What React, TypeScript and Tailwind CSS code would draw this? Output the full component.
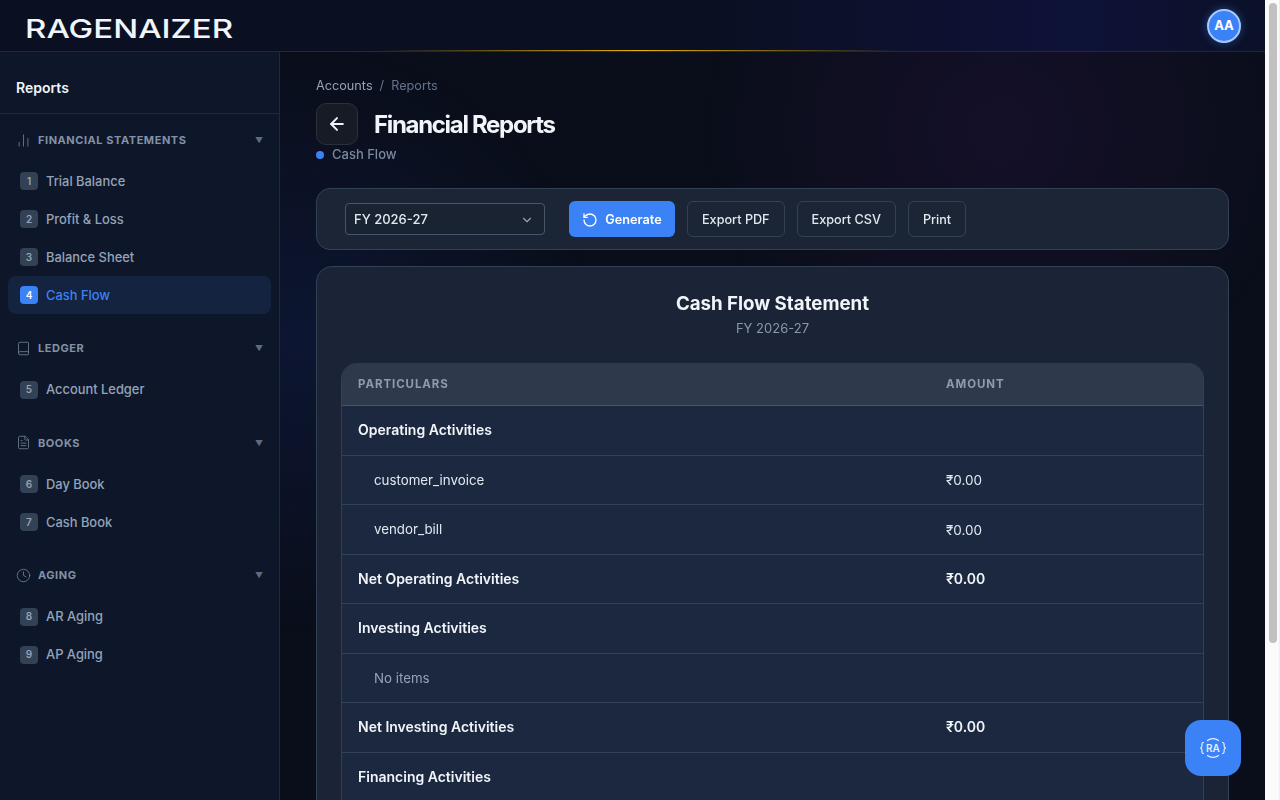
import React from 'react';
import { ArrowLeft, Book, ChartNoAxesColumn, ChevronDown, Clock, FileText, RotateCcw } from 'lucide-react';

const sections = [
  {
    title: 'Financial Statements',
    icon: ChartNoAxesColumn,
    items: [
      { n: 1, label: 'Trial Balance' },
      { n: 2, label: 'Profit & Loss' },
      { n: 3, label: 'Balance Sheet' },
      { n: 4, label: 'Cash Flow', active: true },
    ],
  },
  { title: 'Ledger', icon: Book, items: [{ n: 5, label: 'Account Ledger' }] },
  {
    title: 'Books',
    icon: FileText,
    items: [
      { n: 6, label: 'Day Book' },
      { n: 7, label: 'Cash Book' },
    ],
  },
  {
    title: 'Aging',
    icon: Clock,
    items: [
      { n: 8, label: 'AR Aging' },
      { n: 9, label: 'AP Aging' },
    ],
  },
];

const rows = [
  { label: 'Operating Activities', kind: 'head' },
  { label: 'customer_invoice', amount: '₹0.00', kind: 'item' },
  { label: 'vendor_bill', amount: '₹0.00', kind: 'item' },
  { label: 'Net Operating Activities', amount: '₹0.00', kind: 'head' },
  { label: 'Investing Activities', kind: 'head' },
  { label: 'No items', kind: 'empty' },
  { label: 'Net Investing Activities', amount: '₹0.00', kind: 'head' },
  { label: 'Financing Activities', kind: 'head' },
  { label: 'No items', kind: 'empty' },
  { label: 'Net Financing Activities', amount: '₹0.00', kind: 'head' },
  { label: 'Net Cash Flow', amount: '₹0.00', kind: 'head' },
];

function Sidebar() {
  return (
    <aside className="sticky top-[52px] h-[748px] w-[280px] shrink-0 border-r border-[#1e293b] bg-[#0e1729]">
      <div className="flex h-[62px] items-center border-b border-[#1e293b] px-4 pt-[10px] text-sm font-semibold text-[#f1f5f9]">
        Reports
      </div>
      <nav className="pt-[10px]">
        {sections.map((section) => (
          <div key={section.title} className="mb-[18.1px]">
            <div className="flex h-[32px] items-center justify-between pl-[15.5px] pr-[16px]">
              <div className="flex items-center gap-[7.5px]">
                <section.icon size={15} strokeWidth={1.5} className="text-[#64748b]" />
                <span className="text-[11px] font-bold uppercase tracking-[0.05em] text-[#8391a7]">{section.title}</span>
              </div>
              <span className="text-[8px] text-[#5f6b7e]">▼</span>
            </div>
            <div className="mt-[6.4px] px-2">
              {section.items.map((item) => (
                <div
                  key={item.n}
                  className={`flex h-[38px] items-center gap-2 rounded-lg px-3 text-[12.9px] font-medium ${
                    item.active ? 'bg-[#14233f] text-[#3b82f6]' : 'text-[#94a3b8]'
                  }`}
                >
                  <span
                    className={`flex h-[18px] w-[18px] items-center justify-center rounded text-[10px] font-semibold ${
                      item.active ? 'bg-[#3b82f6] text-white' : 'bg-[#334155] text-[#94a3b8]'
                    }`}
                  >
                    {item.n}
                  </span>
                  {item.label}
                </div>
              ))}
            </div>
          </div>
        ))}
      </nav>
    </aside>
  );
}

function ReportRow({ row }: { row: (typeof rows)[number] }) {
  const labelClass =
    row.kind === 'head'
      ? 'pl-4 text-sm font-semibold text-[#f1f5f9]'
      : row.kind === 'item'
        ? 'pl-8 pt-[2px] text-[13.3px] text-[#e2e8f0]'
        : 'pl-8 pt-[2px] text-[13.3px] text-[#94a3b8]';
  return (
    <div className="grid h-[49.5px] grid-cols-[588px_1fr] items-center border-b border-[#334155]">
      <div className={labelClass}>{row.label}</div>
      <div className={`pl-4 ${row.kind === 'head' ? 'text-sm font-semibold text-[#f1f5f9]' : 'pt-px text-[13.5px] text-[#e2e8f0]'}`}>{row.amount}</div>
    </div>
  );
}

export default function App() {
  return (
    <div className="flex h-screen overflow-hidden bg-[#fafafa] font-['Inter',sans-serif]">
      <div className="relative h-screen min-w-0 flex-1 overflow-y-auto bg-[#0a0e1a]">
        <div className="pointer-events-none fixed inset-y-0 left-0 right-[15px] bg-[radial-gradient(circle_at_300px_340px,rgba(30,64,175,0.16),transparent_300px),radial-gradient(circle_at_1000px_130px,rgba(88,28,135,0.14),transparent_300px)]" />

        <header className="sticky top-0 z-20 flex h-[52px] items-center justify-between border-b border-[#1e293b] bg-[linear-gradient(90deg,#0a1022_0%,#0a1022_55%,#0e1238_85%,#0b1128_100%)] pl-[25px] pr-6">
          <span className="origin-left scale-x-[1.27] pt-[6px] text-[26px] font-medium leading-none text-[#f1f5f9]">RAGENAIZER</span>
          <div className="flex h-[34px] w-[34px] items-center justify-center rounded-full border-2 border-[#a9c8fb] bg-[#3b82f6] text-[13px] font-bold text-white shadow-[0_0_8px_rgba(59,130,246,0.45)]">
            AA
          </div>
          <div className="absolute bottom-0 left-[380px] h-px w-[520px] bg-[linear-gradient(90deg,transparent,#eab308_50%,transparent)]" />
        </header>

        <div className="relative flex items-start">
          <Sidebar />
          <main className="min-w-0 flex-1 px-9 pb-[25px] pt-[26px]">
            <div className="flex h-[16px] items-center gap-[7px] text-[12.7px] text-[#94a3b8]">
              <span>Accounts</span>
              <span className="text-[#64748b]">/</span>
              <span className="text-[#64748b]">Reports</span>
            </div>
            <div className="mt-[9px] flex items-center gap-4">
              <div className="flex h-[42px] w-[42px] items-center justify-center rounded-[10px] border border-[#2a303c] bg-[#171b26] text-[#f1f5f9]">
                <ArrowLeft size={20} strokeWidth={2.4} />
              </div>
              <h1 className="pt-[2px] text-2xl font-bold tracking-[-0.055em] text-[#f1f5f9]">Financial Reports</h1>
            </div>
            <div className="mt-px flex h-[18px] items-center gap-2 text-[13px] font-medium text-[#7b899e]">
              <span className="h-2 w-2 rounded-full bg-[#3b82f6]" />
              Cash Flow
            </div>

            <div className="mt-[24px] flex h-[62px] items-center gap-3 rounded-[14px] border border-[#334155] bg-[#1c2536] pl-7">
              <div className="mr-3 flex h-8 w-[200px] items-center justify-between rounded border border-[#475569] bg-[#1a2332] pl-2 pr-[10px] pt-px text-[13px] font-medium text-[#e2e8f0]">
                FY 2026-27
                <ChevronDown size={14} className="text-[#94a3b8]" />
              </div>
              <button className="flex h-9 w-[106px] items-center justify-center gap-[7px] rounded-md bg-[#3b82f6] pt-px text-[12.7px] font-semibold text-white">
                <RotateCcw size={16} />
                Generate
              </button>
              {['Export PDF', 'Export CSV', 'Print'].map((label) => (
                <button
                  key={label}
                  className="flex h-9 items-center rounded-md border border-[#334155] bg-[#1c2536] px-[14px] pt-[2px] text-[12.65px] font-medium text-[#e2e8f0]"
                >
                  {label}
                </button>
              ))}
            </div>

            <section className="mt-4 rounded-2xl border border-[#334155] bg-[#1b2436] px-6 pb-6 pt-[23px]">
              <h2 className="text-center text-[18.7px] font-bold leading-[28px] text-[#f1f5f9]">Cash Flow Statement</h2>
              <p className="text-center text-[13px] leading-[20px] text-[#8a97ab]">FY 2026-27</p>
              <div className="mt-[24.5px] overflow-hidden rounded-t-2xl border-x border-[#334155] bg-[#1b2840]">
                <div className="grid h-[43.5px] grid-cols-[588px_1fr] items-center border-b border-[#475569] bg-[#2e394c] pt-[2px] text-[11.5px] font-bold uppercase tracking-[0.08em] text-[#8f9cb0]">
                  <div className="pl-4">Particulars</div>
                  <div className="pl-4">Amount</div>
                </div>
                {rows.map((row, i) => (
                  <ReportRow key={i} row={row} />
                ))}
              </div>
            </section>
          </main>
        </div>

        <div className="fixed bottom-6 right-[39px] z-30 flex h-14 w-14 items-center justify-center rounded-2xl bg-[#3b82f6]">
          <svg width="28" height="28" viewBox="0 0 28 28" fill="none" stroke="#e6efff" strokeWidth="1.2" strokeLinecap="round" strokeLinejoin="round">
            <path d="M4.5 8.5c-1.3 0-1.6.7-1.6 1.8v1.6c0 1-.4 1.6-1.4 2.1 1 .5 1.4 1.1 1.4 2.1v1.6c0 1.1.3 1.8 1.6 1.8" />
            <path d="M23.5 8.5c1.3 0 1.6.7 1.6 1.8v1.6c0 1 .4 1.6 1.4 2.1-1 .5-1.4 1.1-1.4 2.1v1.6c0 1.1-.3 1.8-1.6 1.8" />
            <path d="M8.5 6.5c1.5-1.2 3.4-1.8 5.5-1.8s4 .6 5.5 1.8" />
            <path d="M8.5 21.5c1.5 1.2 3.4 1.8 5.5 1.8s4-.6 5.5-1.8" />
            <text x="14" y="17.5" textAnchor="middle" fontSize="10" fontWeight="600" fill="#e6efff" stroke="none" fontFamily="Inter, sans-serif">RA</text>
          </svg>
        </div>
      </div>

      <div className="h-screen w-[15px] shrink-0 border-r border-[#eeeeee] pl-1 pr-[2px] pt-[3px]">
        <div className="h-[640px] rounded-full bg-[#c1c1c1]" />
      </div>
    </div>
  );
}
